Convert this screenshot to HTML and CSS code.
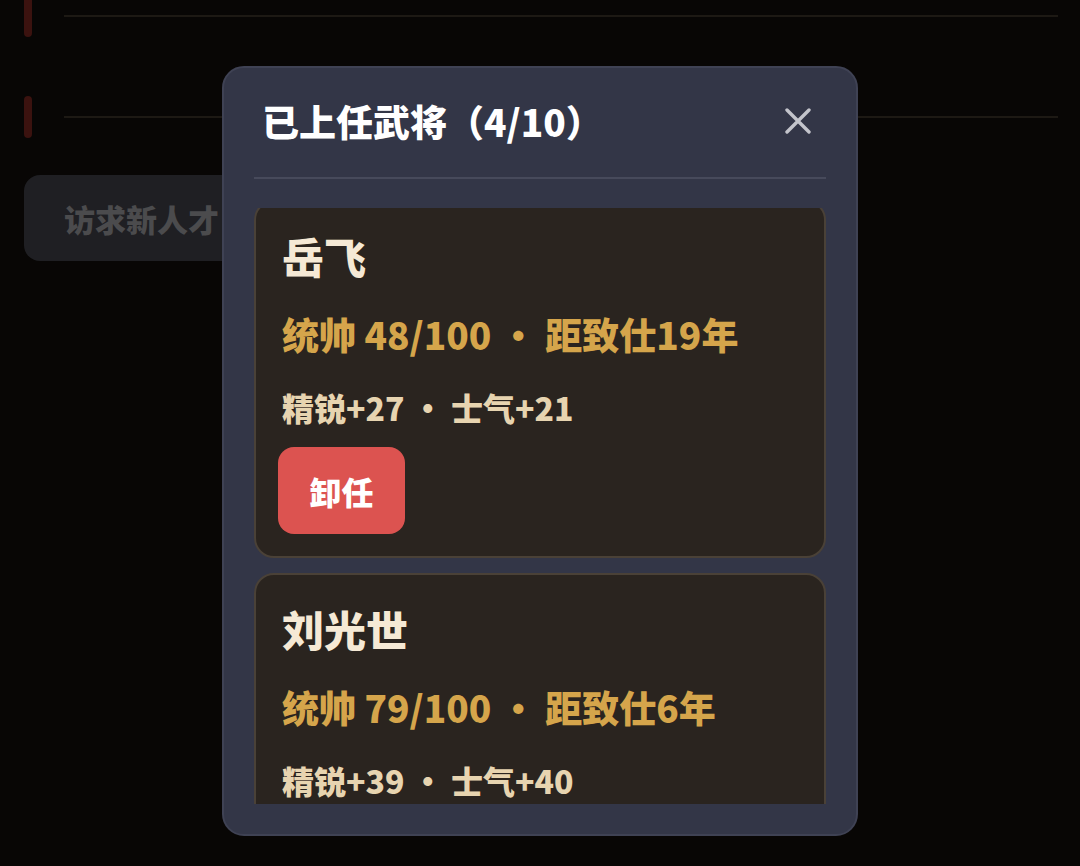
FILE: index.html
```html
<!DOCTYPE html>
<html lang="zh-CN">
<head>
<meta charset="utf-8">
<title>已上任武将</title>
<link rel="stylesheet" href="styles.css">
</head>
<body>
<div class="page">
  <div class="row row-first">
    <span class="bar"></span>
    <span class="rule"></span>
  </div>
  <div class="row">
    <span class="bar"></span>
    <span class="rule"></span>
  </div>
  <button class="seek">访求新人才</button>
</div>

<div class="modal">
  <div class="modal-head">
    <h2 class="modal-title">已上任武将（4/10）</h2>
    <button class="close" aria-label="关闭">
      <svg width="26" height="26" viewBox="0 0 26 26"><path d="M2 2 L24 24 M24 2 L2 24" stroke="#c3c4cb" stroke-width="3.4" stroke-linecap="round" fill="none"/></svg>
    </button>
  </div>
  <div class="modal-body">
    <div class="list">
      <div class="card">
        <div class="name">岳飞</div>
        <div class="meta">统帅 48/100 · 距致仕19年</div>
        <div class="stats">精锐+27 · 士气+21</div>
        <button class="dismiss">卸任</button>
      </div>
      <div class="card">
        <div class="name">刘光世</div>
        <div class="meta">统帅 79/100 · 距致仕6年</div>
        <div class="stats">精锐+39 · 士气+40</div>
        <button class="dismiss">卸任</button>
      </div>
    </div>
  </div>
</div>
</body>
</html>
```

FILE: styles.css
```css
* { box-sizing: border-box; }

html, body {
  margin: 0;
  padding: 0;
  width: 1080px;
  height: 866px;
  overflow: hidden;
  background: #080605;
  font-family: "Noto Sans CJK SC", "Noto Sans", sans-serif;
}

.page {
  padding: 0 22px 0 24px;
}

.row {
  display: flex;
  align-items: flex-start;
  gap: 32px;
  height: 42px;
  margin-top: 59px;
}

.row-first {
  margin-top: -5px;
}

.bar {
  width: 8px;
  height: 42px;
  border-radius: 4px;
  background: #3b120f;
}

.rule {
  flex: 1;
  margin-top: 20px;
  border-top: 2px solid #1d1914;
}

.seek {
  display: block;
  margin-top: 37px;
  width: 280px;
  height: 86px;
  border: none;
  border-radius: 16px;
  background: #1f1f23;
  color: #4b4b4d;
  font-family: inherit;
  font-size: 31px;
  font-weight: 900;
  text-align: left;
  padding: 0 0 0 40px;
}

.modal {
  position: absolute;
  left: 222px;
  top: 66px;
  width: 636px;
  height: 770px;
  border: 2px solid #3f4254;
  border-radius: 22px;
  background: #333647;
  padding: 30px;
  display: flex;
  flex-direction: column;
}

.modal-head {
  display: flex;
  align-items: center;
  justify-content: space-between;
  height: 81px;
  padding: 0 10px 33px 8px;
  border-bottom: 2px solid #474a5b;
  flex: none;
}

.modal-title {
  margin: 0;
  font-size: 37px;
  line-height: 48px;
  font-weight: 900;
  color: #ffffff;
}

.close {
  width: 36px;
  height: 36px;
  border: none;
  background: none;
  padding: 0;
  display: flex;
  align-items: center;
  justify-content: center;
}

.modal-body {
  flex: 1;
  margin-top: 29px;
  overflow: hidden;
}

.list {
  margin-top: -8px;
  display: flex;
  flex-direction: column;
  gap: 15px;
}

.card {
  border: 2px solid #4a4137;
  border-radius: 20px;
  background: #2a241f;
  padding: 26px 24px 22px 26px;
}

.name {
  font-size: 42px;
  line-height: 56px;
  font-weight: 900;
  color: #f5e9d5;
}

.meta {
  margin-top: 26px;
  font-size: 37px;
  line-height: 48px;
  font-weight: 900;
  color: #d5a54b;
}

.stats {
  margin-top: 27px;
  font-size: 32px;
  line-height: 44px;
  font-weight: 900;
  color: #e7d4b0;
}

.dismiss {
  display: block;
  margin-top: 18px;
  margin-left: -4px;
  width: 127px;
  height: 87px;
  border: none;
  border-radius: 16px;
  background: #dc5350;
  color: #ffffff;
  font-family: inherit;
  font-size: 32px;
  font-weight: 900;
  padding: 0;
}
```
